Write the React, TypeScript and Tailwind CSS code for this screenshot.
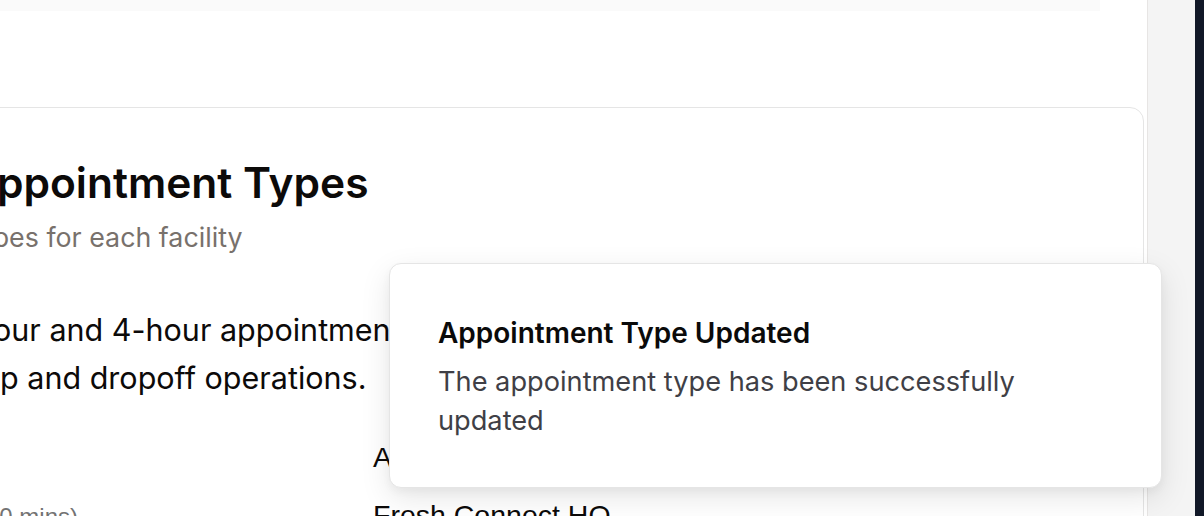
import React from 'react';

function Toast() {
  return (
    <div className="absolute left-[389px] top-[263px] w-[773px] h-[225px] rounded-[12px] border border-[#e5e5e5] bg-white shadow-[0_10px_30px_rgba(0,0,0,0.10),0_4px_8px_rgba(0,0,0,0.04)] pl-[48px] pt-[50px]">
      <div className="text-[28px] leading-[38px] font-semibold text-[#0a0a0a]">
        Appointment Type Updated
      </div>
      <p className="mt-[10px] w-[620px] text-[27.2px] leading-[39px] text-[#3f3f46]">
        The appointment type has been successfully updated
      </p>
    </div>
  );
}

export default function App() {
  return (
    <div
      className="relative flex h-[516px] w-[1204px] overflow-hidden bg-white"
      style={{ fontFamily: 'Inter, "Noto Sans", sans-serif' }}
    >
      {/* main panel */}
      <main className="w-[1148px] shrink-0 border-r border-[#e7e5e4] bg-white overflow-hidden">
        <div className="h-[11px] w-[1100px] bg-[#fafafa]" />

        <section className="mt-[96px] -ml-[75px] w-[1219px] rounded-[14px] border border-[#e5e5e5] bg-white px-12 pt-[49px]">
          <h2 className="-ml-[8px] whitespace-nowrap text-[42.5px] leading-[52px] font-semibold text-[#0c0a09]">
            Appointment Types
          </h2>
          <p className="mt-3 -ml-[12px] whitespace-nowrap text-[26.8px] leading-[32px] text-[#78716c]">
            Types for each facility
          </p>

          <div className="mt-[53px] text-[30.5px] leading-[48px] text-[#0c0a09]">
            <p className="ml-[1px] whitespace-nowrap">
              hour and 4-hour appointment types are available for
            </p>
            <p className="ml-[8px] whitespace-nowrap">
              up and dropoff operations.
            </p>
          </div>

          <div style={{ fontFamily: '"Liberation Sans", Arial, sans-serif' }}>
            <div className="mt-[35px] flex text-[28.5px] leading-[40px] text-[#0c0a09]">
              <div className="w-[399px] shrink-0" />
              <div className="whitespace-nowrap">Assigned Facility</div>
            </div>
            <div className="mt-[18px] flex items-baseline leading-[40px]">
              <div className="w-[399px] shrink-0 whitespace-nowrap text-[24px] text-[#737373]">
                <span className="ml-[4px] inline-block">(60 mins)</span>
              </div>
              <div className="whitespace-nowrap text-[28.5px] text-[#0c0a09]">Fresh Connect HQ</div>
            </div>
          </div>
        </section>
      </main>

      {/* side rail */}
      <aside className="w-[47px] shrink-0 bg-[#f4f4f4]" />
      <div className="flex-1 bg-[#111827]" />

      <Toast />
    </div>
  );
}
